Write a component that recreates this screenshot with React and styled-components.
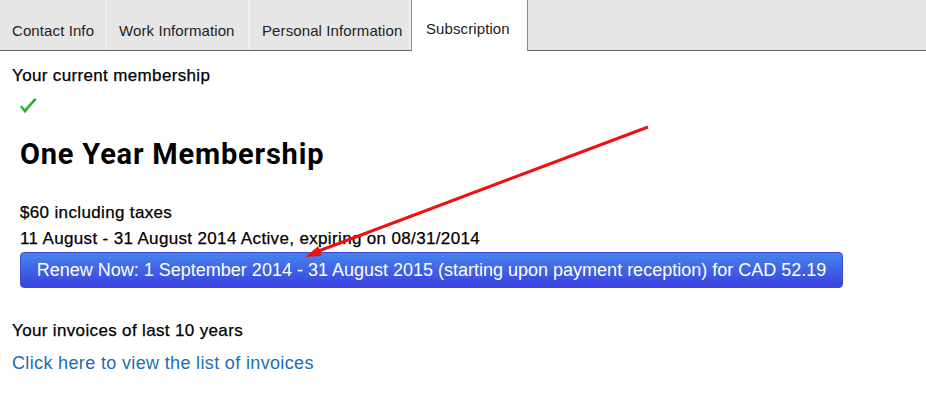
import React from "react";
import styled, { createGlobalStyle } from "styled-components";

const Global = createGlobalStyle`
  html, body { margin: 0; padding: 0; background: #fff; }
  body { font-family: "Liberation Sans", Arial, sans-serif; color: #000; }
`;

const Page = styled.div`
  position: relative;
  width: 926px;
  height: 393px;
  overflow: hidden;
  background: #fff;
`;

const TabBar = styled.div`
  display: flex;
  height: 50px;
  background: #e6e6e6;
  border-bottom: 1px solid #646464;
`;

const Tab = styled.div`
  box-sizing: border-box;
  width: ${(p) => p.$width}px;
  height: ${(p) => (p.$active ? "51px" : "50px")};
  margin-bottom: ${(p) => (p.$active ? "-1px" : "0")};
  padding: ${(p) => (p.$active ? "20px 0 0 14px" : "22px 0 0 12px")};
  font-size: 15px;
  line-height: 17px;
  letter-spacing: 0.1px;
  color: #222;
  background: ${(p) => (p.$active ? "#fff" : "#e6e6e6")};
  border-right: ${(p) => (p.$active ? "1px solid #868686" : "2px solid #efefef")};
  border-left: ${(p) => (p.$active ? "1px solid #868686" : "none")};
  white-space: nowrap;
`;

const Content = styled.div`
  padding: 15px 12px 0 12px;
`;

const Label = styled.div`
  font-size: 17px;
  line-height: 20px;
  letter-spacing: 0.35px;
  -webkit-text-stroke: 0.25px #000;
`;

const Check = styled.svg`
  display: block;
  margin: 11px 0 0 7px;
`;

const Details = styled.div`
  padding-left: 8px;
`;

const Title = styled.h1`
  margin: 22px 0 0 0;
  font-family: Roboto, "Liberation Sans", sans-serif;
  font-weight: 700;
  font-size: 29px;
  line-height: 34px;
  letter-spacing: 0.8px;
`;

const Info = styled.div`
  margin-top: 29px;
  font-size: 17px;
  line-height: 26px;
  letter-spacing: 0.35px;
  -webkit-text-stroke: 0.25px #000;
`;

const RenewButton = styled.button`
  display: block;
  box-sizing: border-box;
  width: 823px;
  height: 36px;
  margin: 0;
  border: 1px solid #3a4ad2;
  border-radius: 4px;
  background: linear-gradient(#4685ec, #3a40e0);
  color: #fff;
  font-family: "Liberation Sans", Arial, sans-serif;
  font-size: 18px;
  padding: 0;
  text-align: center;
  cursor: pointer;
`;

const Section = styled.div`
  margin-top: 33px;
`;

const InvoiceLink = styled.a`
  display: block;
  margin-top: 11px;
  font-size: 18px;
  line-height: 22px;
  letter-spacing: 0.35px;
  color: #1e6cb4;
  text-decoration: none;
`;

const Arrow = styled.svg`
  position: absolute;
  left: 0;
  top: 0;
  pointer-events: none;
`;

const tabs = [
  { label: "Contact Info", width: 107 },
  { label: "Work Information", width: 143 },
  { label: "Personal Information", width: 161 },
  { label: "Subscription", width: 117, active: true },
];

export default function App() {
  return (
    <Page>
      <Global />
      <TabBar>
        {tabs.map((t) => (
          <Tab key={t.label} $width={t.width} $active={t.active}>
            {t.label}
          </Tab>
        ))}
      </TabBar>
      <Content>
        <Label>Your current membership</Label>
        <Check width="18" height="18" viewBox="0 0 18 18">
          <defs>
            <linearGradient id="chk" x1="0" y1="1" x2="1" y2="0">
              <stop offset="0" stopColor="#1f9a1f" />
              <stop offset="0.5" stopColor="#3cc43c" />
              <stop offset="1" stopColor="#1e8a1e" />
            </linearGradient>
          </defs>
          <path d="M0.8 9.5 L3 8.6 L5.6 11.8 L15.6 1.2 L17.6 2.6 L6 16.2 Z" fill="url(#chk)" />
        </Check>
        <Details>
          <Title>One Year Membership</Title>
          <Info>
            <div>$60 including taxes</div>
            <div>11 August - 31 August 2014 Active, expiring on 08/31/2014</div>
          </Info>
          <RenewButton>
            Renew Now: 1 September 2014 - 31 August 2015 (starting upon payment reception) for CAD 52.19
          </RenewButton>
        </Details>
        <Section>
          <Label>Your invoices of last 10 years</Label>
          <InvoiceLink href="#">Click here to view the list of invoices</InvoiceLink>
        </Section>
      </Content>
      <Arrow width="926" height="393">
        <line x1="648" y1="127" x2="316" y2="252" stroke="#f01010" strokeWidth="3" />
        <polygon points="305,257 321.8,255.7 318.2,246.3" fill="#f01010" />
      </Arrow>
    </Page>
  );
}
